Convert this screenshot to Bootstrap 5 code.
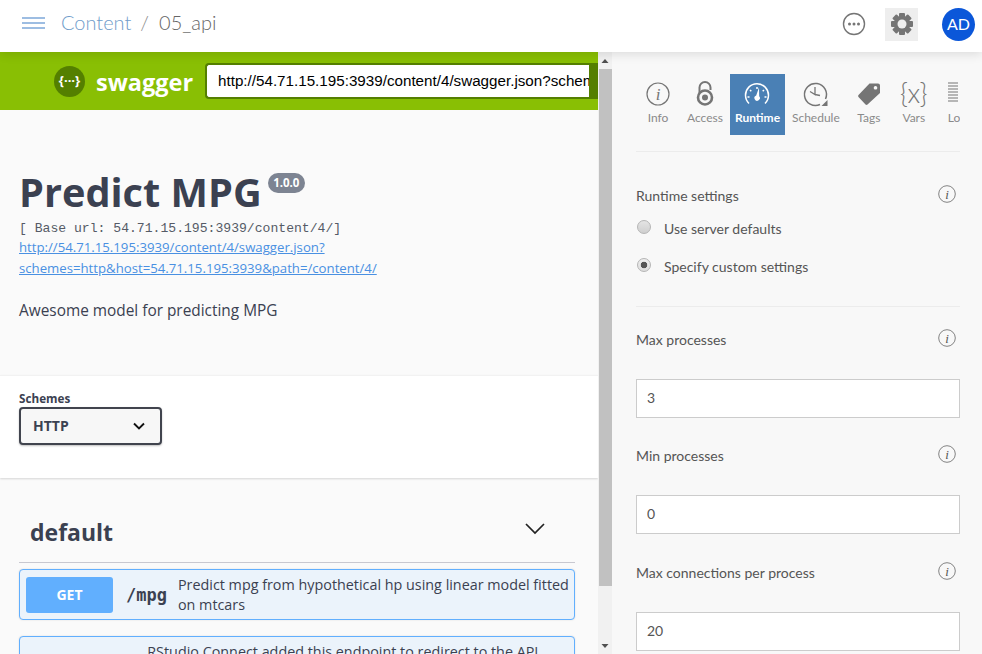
<!DOCTYPE html>
<html lang="en">
  <head>
    <meta charset="UTF-8" />
    <meta name="viewport" content="width=device-width, initial-scale=1.0" />
    <title>05_api</title>
    <link href="https://cdn.jsdelivr.net/npm/bootstrap@5.3.0/dist/css/bootstrap.min.css" rel="stylesheet" />
    <style>
      html, body { height: 654px; overflow: hidden; }
      body { font-family: Lato, sans-serif; background: #fff; }

      /* top bar */
      .app-head { height: 52px; background: #fff; box-shadow: 0 2px 10px rgba(0,0,0,.12); position: relative; z-index: 5; padding: 0 7px 4px 22px; }
      .burger { width: 23px; margin: 0 16px 2px 0; }
      .burger i { display: block; height: 2px; background: #9dbde2; margin: 3px 0; }
      .crumb, .crumb-sep, .crumb-now { font-size: 20px; font-weight: 300; margin-bottom: 5px; }
      .crumb { color: #6f9cca; }
      .crumb-sep { color: #8a8a8a; margin-left: 9px; margin-right: 10px; }
      .crumb-now { color: #666; }
      .dots-ico { margin-left: auto; margin-right: -1px; }
      .gear-box { width: 33px; height: 33px; background: #eee; margin: 0 24px 0 20px; }
      .avatar { width: 33px; height: 33px; border-radius: 50%; background: #0b57d9; color: #fff; font-size: 16px; }

      .app-body { height: 602px; }

      /* swagger side */
      .sw-pane { width: 598px; height: 602px; overflow: hidden; background: #fafafa; font-family: "Open Sans", sans-serif; color: #3b4151; }
      .sw-bar { height: 58px; background: #89bf04; padding-left: 54px; }
      .sw-logo { width: 31px; height: 31px; background: #547f00; border-radius: 50%; color: #fff; font-size: 13px; font-weight: 700; margin-right: 11px; }
      .sw-brand { color: #fff; font-size: 23.500px; font-weight: 700; width: 109px; line-height: 1; padding-top: 3px; white-space: nowrap; }
      .sw-url { width: 384px; height: 36px; border: 2px solid #547f00; border-right: 0; border-radius: 4px 0 0 4px; background: #fff; font: 15.200px "Liberation Sans", sans-serif; color: #000; padding: 0 0 0 11px; white-space: nowrap; overflow: hidden; line-height: 32px; }
      .sw-go { width: 9px; height: 36px; background: #547f00; }
      .sw-info { height: 265px; padding: 60px 19px 0; }
      .sw-title { font-size: 39.700px; font-weight: 700; line-height: 44px; margin: 0; color: #3b4151; white-space: nowrap; }
      .sw-ver { background: #7d8492; color: #fff; font-size: 11.500px; font-weight: 700; border-radius: 10px; padding: 0 5.500px; height: 20px; line-height: 20px; margin: 3px 0 0 6px; }
      .sw-base { font: 13.100px/15px "Liberation Mono", monospace; color: #555a66; margin-top: 7px; }
      .sw-link { display: block; font-size: 13.200px; line-height: 21px; color: #4990e2; width: 380px; margin-top: 1px; }
      .sw-desc { font-size: 15.400px; line-height: 20px; margin-top: 22px; }
      .sw-schemes { height: 103px; background: #fff; box-shadow: 0 1px 2px rgba(0,0,0,.15); padding: 14px 19px 0; border-top: 1px solid #f2f2f2; }
      .sw-schemes label { font-size: 11.700px; font-weight: 700; line-height: 17px; display: block; }
      .sw-select { width: 143px; height: 38px; border: 2px solid #41444e; border-radius: 4px; background-color: #f7f7f7; font-size: 14px; font-weight: 700; color: #3b4151; padding: 0 0 2px 12px; box-shadow: 0 1px 2px rgba(0,0,0,.25); background-image: url("data:image/svg+xml,%3Csvg xmlns='http://www.w3.org/2000/svg' viewBox='0 0 14 10'%3E%3Cpath d='M2 2.500l5 5 5-5' fill='none' stroke='%23111' stroke-width='1.900'/%3E%3C/svg%3E"); background-position: right 14px center; background-size: 14px 10px; }
      .sw-tag { padding: 37px 0 0; margin: 0 23px 0 19px; border-bottom: 1px solid #c8c8d0; height: 85px; }
      .sw-tag h4 { font-size: 23px; font-weight: 700; margin: 0 0 0 11px; line-height: 34px; color: #3b4151; }
      .sw-chev { margin: 3px 28px 0 0; }
      .sw-op { margin: 6px 23px 16px 19px; min-height: 51px; background: #ebf3fb; border: 1px solid #61affe; border-radius: 4px; padding: 5px 2px 5px 6px; box-shadow: 0 0 2px rgba(0,0,0,.12); }
      .sw-op-tall { min-height: 71px; margin-top: 0; }
      .sw-method { width: 87px; height: 36px; flex: none; background: #61affe; color: #fff; font-size: 14px; font-weight: 700; border-radius: 3px; }
      .sw-path { font: 700 17px "DejaVu Sans Mono", monospace; padding: 0 11px 0 13px; }
      .sw-sum { font-size: 14.350px; line-height: 19.500px; }

      /* scrollbar */
      .fake-scroll { width: 14px; height: 602px; background: #f1f1f1; }
      .fake-scroll .tri { height: 17px; color: #505050; }
      .fake-thumb { height: 517px; background: #c1c1c1; margin-left: 1px; }
      .fake-rest { flex: 1; }

      /* right settings panel */
      .rs-pane { width: 370px; height: 602px; overflow: hidden; background: #f8f8f8; padding: 22px 22px 0 24px; color: #555; font-size: 14px; }
      .rs-tabs { height: 61px; overflow: hidden; margin-bottom: 16px; }
      .rs-tab { flex: none; min-width: 44px; padding: 0 7px; height: 61px; color: #8a8a8a; font-size: 12px; line-height: 14px; text-align: center; }
      .rs-tab.is-on { background: #4a80b5; color: #fff; font-weight: 700; padding: 0 5px; width: 55px; }
      .rs-tab.is-vars { min-width: 46px; }
      .rs-tab.is-logs { text-align: left; padding: 0 0 0 11px; }
      .rs-ico { height: 37px; padding-top: 8px; color: #757575; }
      .rs-ico.is-lock { padding-top: 7px; }
      .is-on .rs-ico { color: #fff; }
      .rs-ico.rs-vars { font-size: 27px; font-weight: 300; line-height: 30px; padding-top: 4px; white-space: nowrap; margin: 0 -3px; }
      .rs-rule { border-top: 1px solid #ececec; }
      .rs-head { line-height: 20px; }
      .rs-head svg { margin-right: 4px; margin-top: -1px; }
      .rs-radio { height: 38px; }
      .rs-radio label { margin-bottom: 2px; }
      .rs-radio .form-check-input { width: 14px; height: 14px; margin: -5px 13px 0 1px; border: 1px solid #b5b5b5; background: linear-gradient(#e4e4e4, #cfcfcf); box-shadow: none; float: none; }
      .rs-radio .form-check-input:checked { background: radial-gradient(circle, #555 0 3px, transparent 3.600px), linear-gradient(#eee, #ddd); }
      .rs-field { height: 39px; border-radius: 0; border-color: #ccc; font-size: 14px; color: #555; padding: 5px 10px 7px; }
    </style>
  </head>
  <body>
    <header class="app-head d-flex align-items-center">
      <div class="burger"><i></i><i></i><i></i></div>
      <span class="crumb">Content</span><span class="crumb-sep">/</span><span class="crumb-now">05_api</span>
      <svg class="dots-ico" width="24" height="24" viewBox="0 0 24 24"><circle cx="12" cy="12" r="10.500" fill="none" stroke="#757575" stroke-width="1.400"/><circle cx="7.500" cy="12" r="1.500" fill="#757575"/><circle cx="12" cy="12" r="1.500" fill="#757575"/><circle cx="16.500" cy="12" r="1.500" fill="#757575"/></svg>
      <div class="gear-box d-flex align-items-center justify-content-center">
        <svg width="24" height="24" viewBox="0 0 24 24" fill="#757575"><g><rect x="9" y="1" width="6" height="22" rx="1"/><rect x="9" y="1" width="6" height="22" rx="1" transform="rotate(45 12 12)"/><rect x="9" y="1" width="6" height="22" rx="1" transform="rotate(90 12 12)"/><rect x="9" y="1" width="6" height="22" rx="1" transform="rotate(135 12 12)"/></g><circle cx="12" cy="12" r="7" fill="#757575"/><circle cx="12" cy="12" r="4.500" fill="#eee"/></svg>
      </div>
      <div class="avatar d-flex align-items-center justify-content-center">AD</div>
    </header>

    <div class="app-body d-flex">
      <div class="sw-pane">
        <div class="sw-bar d-flex align-items-center">
          <div class="sw-logo d-flex align-items-center justify-content-center">{···}</div>
          <div class="sw-brand">swagger</div>
          <div class="sw-url">http://54.71.15.195:3939/content/4/swagger.json?schemes=http&amp;host=54.71.15.195</div>
          <div class="sw-go"></div>
        </div>
        <div class="sw-info">
          <div class="d-flex align-items-start">
            <h2 class="sw-title">Predict MPG</h2>
            <span class="sw-ver">1.0.0</span>
          </div>
          <div class="sw-base">[ Base url: 54.71.15.195:3939/content/4/]</div>
          <a class="sw-link" href="#">http://54.71.15.195:3939/content/4/swagger.json?schemes=http&amp;host=54.71.15.195:3939&amp;path=/content/4/</a>
          <div class="sw-desc">Awesome model for predicting MPG</div>
        </div>
        <div class="sw-schemes">
          <label for="scheme">Schemes</label>
          <select id="scheme" class="form-select sw-select"><option>HTTP</option></select>
        </div>
        <div class="sw-tag d-flex justify-content-between">
          <h4>default</h4>
          <svg class="sw-chev" width="24" height="24" viewBox="0 0 24 24" fill="none" stroke="#222" stroke-width="1.700"><path d="M3 6l9 9 9-9"/></svg>
        </div>
        <div class="sw-op d-flex align-items-center">
          <span class="sw-method d-flex align-items-center justify-content-center">GET</span>
          <span class="sw-path">/mpg</span>
          <span class="sw-sum">Predict mpg from hypothetical hp using linear model fitted on mtcars</span>
        </div>
        <div class="sw-op sw-op-tall d-flex align-items-center">
          <span class="sw-method d-flex align-items-center justify-content-center">GET</span>
          <span class="sw-path">/</span>
          <span class="sw-sum align-self-start">RStudio Connect added this endpoint to redirect to the API documentation</span>
        </div>
      </div>

      <div class="fake-scroll d-flex flex-column">
        <svg class="tri" width="14" height="17" viewBox="0 0 14 17" fill="#505050"><path d="M3.500 11L7 7l3.500 4z"/></svg>
        <div class="fake-thumb"></div>
        <div class="fake-rest"></div>
        <svg class="tri" width="14" height="17" viewBox="0 0 14 17" fill="#505050"><path d="M3.500 7L7 11l3.500-4z"/></svg>
      </div>

      <div class="rs-pane">
        <div class="rs-tabs d-flex">
          <div class="rs-tab">
            <div class="rs-ico"><svg width="24" height="24" viewBox="0 0 24 24"><circle cx="12" cy="12" r="11" fill="none" stroke="currentColor" stroke-width="1.200"/><text x="12" y="18" text-anchor="middle" font-family="Liberation Serif" font-style="italic" font-size="17" fill="currentColor">i</text></svg></div>
            Info
          </div>
          <div class="rs-tab">
            <div class="rs-ico is-lock"><svg width="18" height="25" viewBox="0 0 18 25" fill="none" stroke="currentColor"><path d="M3.500 12V6.500a5.500 5.500 0 0 1 11 0V9" stroke-width="2"/><circle cx="9" cy="16.500" r="7" stroke-width="2.600"/><circle cx="9" cy="16.500" r="3" fill="currentColor" stroke="none"/></svg></div>
            Access
          </div>
          <div class="rs-tab is-on">
            <div class="rs-ico"><svg width="26" height="24" viewBox="0 0 26 24" fill="none" stroke="currentColor"><path d="M5 21.500A11.500 11.500 0 1 1 21 21.500" stroke-width="1.500"/><path d="M13 5v2M6 8l1.300 1.300M20 8l-1.300 1.300M3.500 15h2M20.500 15h2" stroke-width="1.500"/><path d="M15 5.500l-2.800 8a2.700 2.700 0 1 0 3 .8z" fill="currentColor" stroke="none"/></svg></div>
            Runtime
          </div>
          <div class="rs-tab">
            <div class="rs-ico"><svg width="26" height="26" viewBox="0 0 26 26" fill="none" stroke="currentColor" stroke-width="1.500"><path d="M22.500 17A11 11 0 1 0 17 22.500"/><path d="M12 5v7.500l-5-3M12 12.500l5 1" stroke-width="1.300"/><path d="M18.500 24h6v-6z" fill="currentColor" stroke="none"/></svg></div>
            Schedule
          </div>
          <div class="rs-tab">
            <div class="rs-ico"><svg width="24" height="24" viewBox="0 0 24 24"><path fill="currentColor" fill-rule="evenodd" d="M12.500 1.500H21a2 2 0 0 1 2 2V11L10.500 22.500a1.500 1.500 0 0 1-2 0L1.500 15a1.500 1.500 0 0 1 0-2zM18.500 4a1.800 1.800 0 1 0 .01 0z"/></svg></div>
            Tags
          </div>
          <div class="rs-tab is-vars">
            <div class="rs-ico rs-vars">{x}</div>
            Vars
          </div>
          <div class="rs-tab is-logs">
            <div class="rs-ico"><svg width="10" height="21" viewBox="0 0 10 21" stroke="currentColor" stroke-width="1.100"><path d="M0 1h10M0 4h10M0 7h10M0 10h10M0 13h10M0 16h10M0 19h10"/></svg></div>
            Logs
          </div>
        </div>
        <div class="rs-rule"></div>

        <div class="rs-head d-flex justify-content-between align-items-start" style="margin-top:34px">
          Runtime settings
          <svg width="18" height="18" viewBox="0 0 18 18"><circle cx="9" cy="9" r="8.300" fill="none" stroke="#757575" stroke-width=".9"/><text x="9" y="13.500" text-anchor="middle" font-family="Liberation Serif" font-style="italic" font-size="13" fill="#555">i</text></svg>
        </div>
        <div class="rs-radio d-flex align-items-center mt-1">
          <input class="form-check-input" type="radio" name="mode" id="m1" />
          <label for="m1">Use server defaults</label>
        </div>
        <div class="rs-radio d-flex align-items-center">
          <input class="form-check-input" type="radio" name="mode" id="m2" checked />
          <label for="m2">Specify custom settings</label>
        </div>
        <div class="rs-rule" style="margin-top:20px"></div>

        <div class="rs-head d-flex justify-content-between align-items-start" style="margin-top:23px;margin-bottom:29px">
          Max processes
          <svg width="18" height="18" viewBox="0 0 18 18"><circle cx="9" cy="9" r="8.300" fill="none" stroke="#757575" stroke-width=".9"/><text x="9" y="13.500" text-anchor="middle" font-family="Liberation Serif" font-style="italic" font-size="13" fill="#555">i</text></svg>
        </div>
        <input class="form-control rs-field" value="3" />

        <div class="rs-head d-flex justify-content-between align-items-start" style="margin-top:28px;margin-bottom:29px">
          Min processes
          <svg width="18" height="18" viewBox="0 0 18 18"><circle cx="9" cy="9" r="8.300" fill="none" stroke="#757575" stroke-width=".9"/><text x="9" y="13.500" text-anchor="middle" font-family="Liberation Serif" font-style="italic" font-size="13" fill="#555">i</text></svg>
        </div>
        <input class="form-control rs-field" value="0" />

        <div class="rs-head d-flex justify-content-between align-items-start" style="margin-top:29px;margin-bottom:29px">
          Max connections per process
          <svg width="18" height="18" viewBox="0 0 18 18"><circle cx="9" cy="9" r="8.300" fill="none" stroke="#757575" stroke-width=".9"/><text x="9" y="13.500" text-anchor="middle" font-family="Liberation Serif" font-style="italic" font-size="13" fill="#555">i</text></svg>
        </div>
        <input class="form-control rs-field" value="20" />
      </div>
    </div>
  </body>
</html>
